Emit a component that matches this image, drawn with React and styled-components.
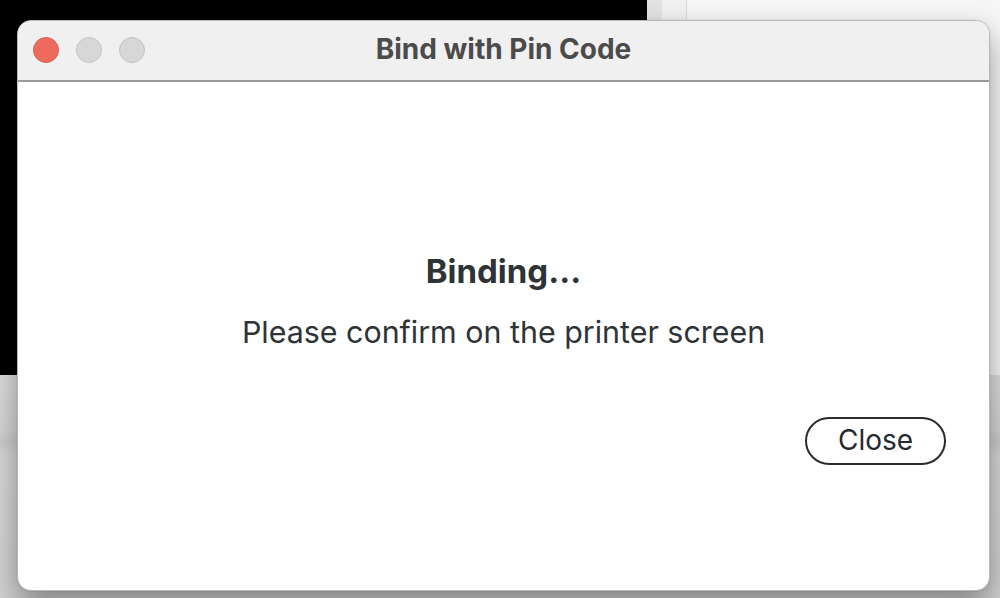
import React from 'react';
import styled, { createGlobalStyle } from 'styled-components';

const GlobalStyle = createGlobalStyle`
  html, body {
    margin: 0;
    padding: 0;
    width: 1000px;
    height: 598px;
    overflow: hidden;
    background: #d8d8d8;
  }
  * { box-sizing: border-box; }
`;

const Desktop = styled.div`
  position: relative;
  width: 1000px;
  height: 598px;
  display: grid;
  grid-template-columns: 647px 1fr;
  grid-template-rows: 375px 1fr;
  font-family: Inter, "Liberation Sans", sans-serif;
`;

const BackPane = styled.div`
  background: ${p => p.bg};
`;

const BackChrome = styled.div`
  display: grid;
  grid-template-columns: 15px 25px 1fr;
  background: #f4f4f4;
`;

const ChromeStrip = styled.div`
  background: ${p => p.bg};
  border-right: ${p => (p.edge ? '1px solid #dcdcdc' : 'none')};
`;

const BackBottom = styled.div`
  grid-column: 1 / 3;
  background: linear-gradient(180deg, #dedede 0%, #d6d6d6 25%, #cdcdcd 30%, #d8d8d8 36%, #d2d2d2 100%);
`;

const Window = styled.div`
  position: absolute;
  left: 17px;
  top: 20px;
  width: 973px;
  height: 571px;
  display: flex;
  flex-direction: column;
  background: #ffffff;
  border: 1px solid #b9b9b9;
  border-radius: 14px;
  overflow: hidden;
  box-shadow: 0 14px 30px rgba(0, 0, 0, 0.38), 0 0 0 1px rgba(0, 0, 0, 0.04);
`;

const TitleBar = styled.div`
  position: relative;
  height: 61px;
  flex: none;
  display: flex;
  align-items: center;
  justify-content: center;
  background: #f0f0f0;
  border-bottom: 2px solid #9b9b9b;
`;

const Lights = styled.div`
  position: absolute;
  left: 15px;
  top: 16px;
  display: flex;
  gap: 17px;
`;

const Light = styled.span`
  width: 26px;
  height: 26px;
  border-radius: 50%;
  background: ${p => (p.red ? '#ef6a5e' : '#d7d7d7')};
  border: 1px solid ${p => (p.red ? '#dc5a4f' : '#c3c3c3')};
`;

const Title = styled.div`
  font-size: 28px;
  font-weight: 700;
  color: #4b4b4b;
  margin-top: -3px;
`;

const Body = styled.div`
  flex: 1;
  display: flex;
  flex-direction: column;
  align-items: center;
  padding-top: 169px;
`;

const Heading = styled.div`
  font-size: 33px;
  line-height: 40px;
  font-weight: 700;
  color: #2e3336;
`;

const Message = styled.div`
  margin-top: 21px;
  font-size: 30.4px;
  line-height: 40px;
  color: #2e3336;
`;

const Actions = styled.div`
  align-self: stretch;
  display: flex;
  justify-content: flex-end;
  padding-right: 43px;
  margin-top: 65px;
`;

const Button = styled.button`
  width: 141px;
  height: 48px;
  border: 2px solid #2c2c2c;
  border-radius: 24px;
  background: #ffffff;
  color: #262a2d;
  font-family: inherit;
  font-size: 28px;
  padding: 0 0 2px;
`;

export default function App() {
  return (
    <>
      <GlobalStyle />
      <Desktop>
        <BackPane bg="#000000" />
        <BackChrome>
          <ChromeStrip bg="#e3e3e3" />
          <ChromeStrip bg="#f1f1f1" edge />
          <ChromeStrip bg="#f6f6f6" />
        </BackChrome>
        <BackBottom />
        <Window>
          <TitleBar>
            <Lights>
              <Light red />
              <Light />
              <Light />
            </Lights>
            <Title>Bind with Pin Code</Title>
          </TitleBar>
          <Body>
            <Heading>Binding...</Heading>
            <Message>Please confirm on the printer screen</Message>
            <Actions>
              <Button>Close</Button>
            </Actions>
          </Body>
        </Window>
      </Desktop>
    </>
  );
}
